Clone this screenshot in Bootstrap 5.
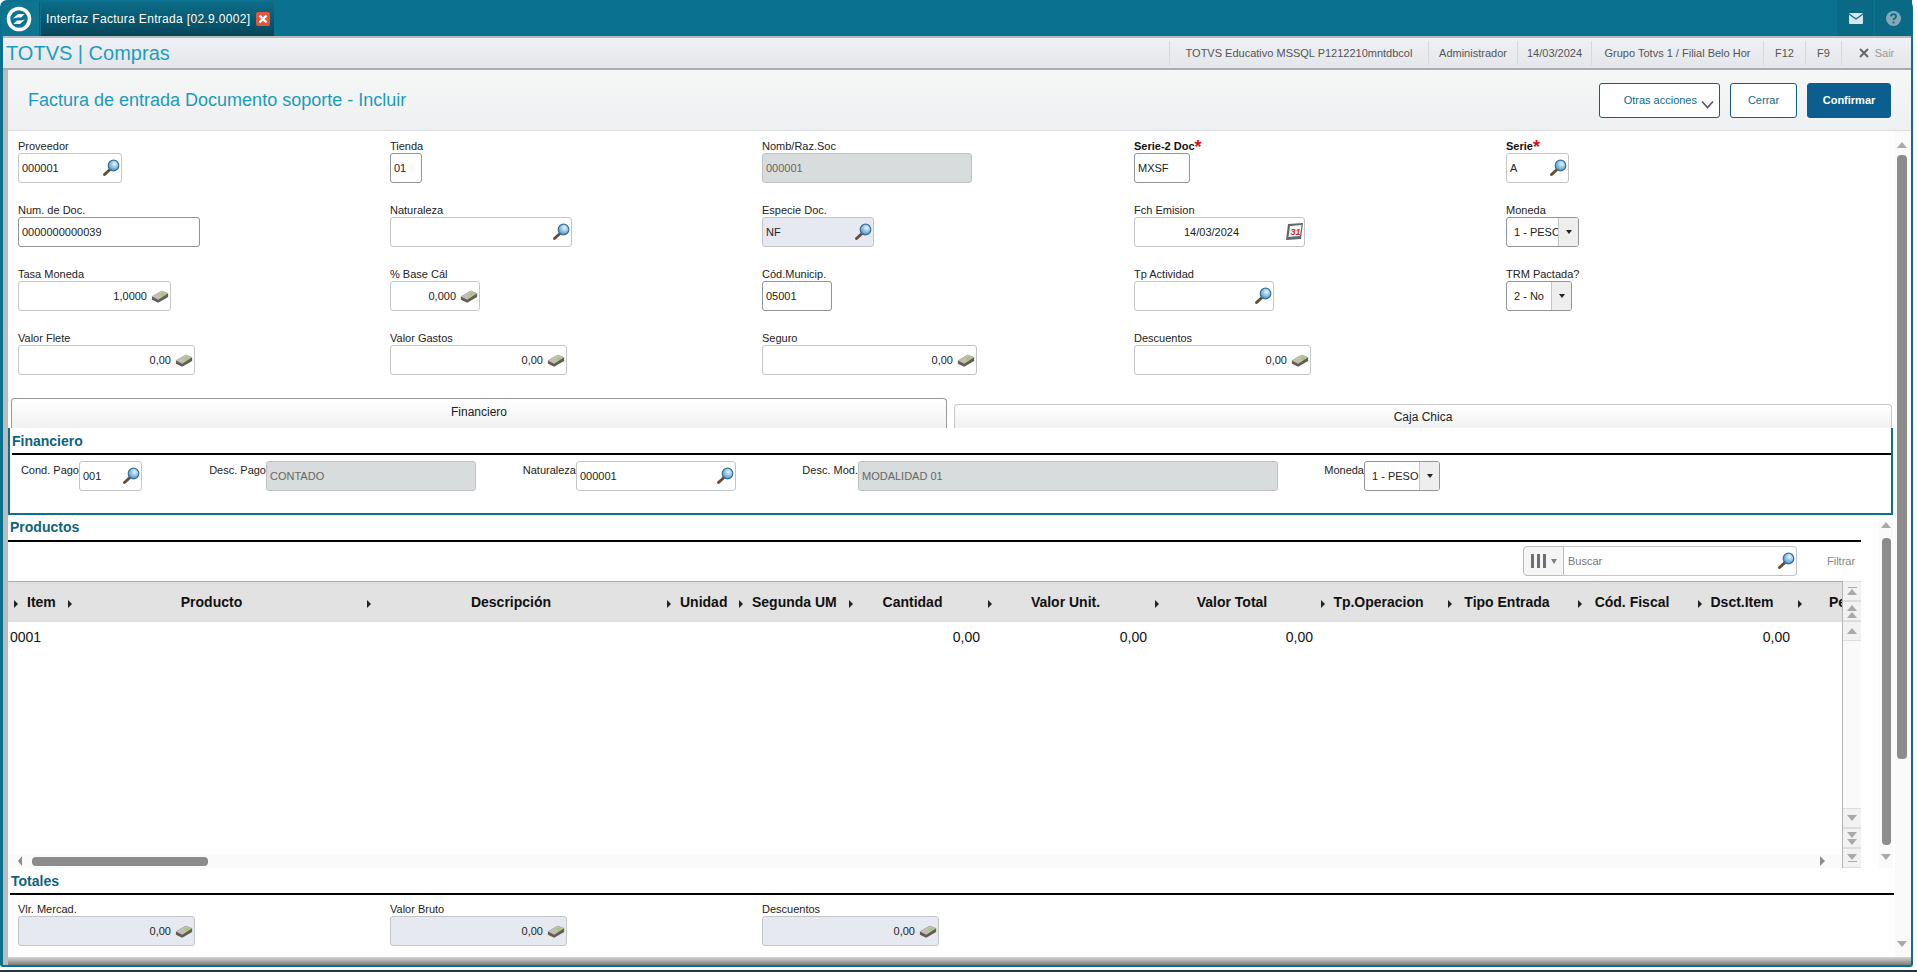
<!DOCTYPE html>
<html lang="es">
<head>
<meta charset="utf-8">
<title>Interfaz Factura Entrada</title>
<link rel="stylesheet" href="https://cdn.jsdelivr.net/npm/bootstrap@5.3.0/dist/css/bootstrap.min.css">
<style>
html,body{height:972px;overflow:hidden;background:#fff;}
body{font-family:"Liberation Sans",Arial,sans-serif;font-size:11px;color:#222;}
.app-frame{width:1913px;height:967px;background:#0b7190;border-radius:7px 7px 3px 3px;display:flex;flex-direction:column;padding:0 2px 2px 3px;}
.foot-strip{height:2px;margin-top:3px;background:#24363d;}
.top-bar{height:36px;flex:none;display:flex;margin:0 -2px 0 -3px;}
.logo-box{width:38px;margin-left:2px;margin-top:2px;padding-right:3px;border-radius:6px 0 0 0;background:#0d7590;border-right:1px solid #0a5d75;display:flex;align-items:center;justify-content:center;}
.win-tab{width:233px;margin-left:1px;margin-top:2px;background:linear-gradient(#0b6d88,#07465a);color:#fff;font-size:12px;letter-spacing:.32px;display:flex;align-items:center;padding-left:5px;gap:6px;}
.win-close{width:14px;height:14px;border-radius:2px;background:#e2553b;display:flex;align-items:center;justify-content:center;}
.top-ico{width:37px;margin-left:1px;background:#0a6a86;border-radius:0 0 3px 3px;display:flex;align-items:center;justify-content:center;}
.top-ico-end{margin-right:1px;}
.sys-bar{height:34px;flex:none;background:linear-gradient(#f0f1f4,#e3e6ea);border-top:2px solid #b9bcbf;border-bottom:2px solid #a9acae;display:flex;align-items:center;padding-left:3px;}
.sys-title{font-size:20px;color:#1a9ec0;line-height:1;}
.sys-item{height:24px;display:flex;align-items:center;font-size:11px;color:#555;border-left:1px solid #d6d8db;white-space:nowrap;justify-content:center;}
.si-a{width:259px;}.si-b{width:89px;}.si-c{width:74px;}.si-d{width:172px;}.si-e{width:42px;}.si-f{width:36px;}.si-g{width:70px;gap:6px;color:#999;}
.body-row{flex:1;min-height:0;display:flex;background:#fff;border-left:5px solid #bcbcbc;}
.body-main{flex:1;min-width:0;display:flex;flex-direction:column;}
.page-head{height:61px;flex:none;background:linear-gradient(#f6f7f7,#eef0f1);border-bottom:1px solid #d9dbdd;display:flex;align-items:center;padding-left:20px;padding-right:20px;}
.page-title{font-size:18px;color:#1a9cbb;margin:0;padding-top:2px;font-weight:400;flex:1;}
.act-btn{height:35px;border:1px solid #0b5f8a;border-radius:3px;background:#fff;color:#0b6990;font-size:11px;padding:0;display:flex;align-items:center;justify-content:center;}
.ab-more{width:121px;justify-content:flex-end;padding-right:5px;gap:4px;}.ab-close{width:67px;margin-left:10px;}.ab-ok{width:84px;margin-left:10px;background:#0b5e8e;color:#fff;font-weight:700;}
.form-wrap{flex:1;min-height:0;display:flex;}
.form-flow{flex:1;min-width:0;display:flex;flex-direction:column;}
.field-grid{display:grid;grid-template-columns:repeat(5,372px);row-gap:20px;padding:8px 0 0 10px;}
.fld-lbl{display:block;height:14px;line-height:15px;font-size:11px;color:#222;white-space:nowrap;margin:0;}
.fld-req{font-weight:700;color:#111;}
.fld-req i{color:#e01010;font-style:normal;font-size:18px;line-height:10px;font-weight:700;vertical-align:-3px;}
.fld-box{height:30px;border:1px solid #c3c6c8;border-radius:3px;background:#fff;display:flex;align-items:center;padding:0 1px 0 3px;font-size:11px;color:#222;box-sizing:border-box;overflow:hidden;}
.fld-box span{flex:1;white-space:nowrap;overflow:hidden;}
.fld-dark{border-color:#8e9497;}
.fld-off{background:#d9dcdd;color:#666;border-color:#bfc3c5;}
.fld-soft{background:#e6e9f0;border-color:#c3c6c8;}
.fld-num span{text-align:right;padding-right:4px;}
.fld-date span{text-align:center;}
.w32{width:32px;}.w56{width:56px;}.w63{width:63px;}.w66{width:66px;}.w70{width:70px;}.w73{width:73px;}.w76{width:76px;}.w90{width:90px;}.w104{width:104px;}.w112{width:112px;}.w140{width:140px;}.w153{width:153px;}.w160{width:160px;}.w171{width:171px;}.w177{width:177px;}.w182{width:182px;}.w210{width:210px;}.w215{width:215px;}.w420{width:420px;}
.sel-drop{width:20px;height:30px;margin-right:-1px;background:#eee;border-left:1px solid #c3c6c8;display:flex;align-items:center;justify-content:center;flex:none;}
.sel-drop::after{content:"";border:3.5px solid transparent;border-top:4px solid #222;border-bottom:0;}
.tab-row{display:flex;align-items:flex-end;gap:7px;height:30px;margin:23px 3px 0 3px;}
.tab-a,.tab-b{border:1px solid #c6c6c6;border-bottom:0;border-radius:4px 4px 0 0;background:linear-gradient(#fff,#f1f1f1);text-align:center;font-size:12px;color:#222;}
.tab-a{width:936px;height:30px;line-height:26px;border-color:#9a9a9a;}
.tab-b{flex:1;height:24px;line-height:25px;}
.fin-panel{height:87px;flex:none;width:1885px;border:2px solid #0b7190;border-top:0;}
.sec-title{font-size:14px;font-weight:700;color:#0b6480;line-height:16px;margin:0;}
.fin-panel .sec-title{padding:5px 0 0 2px;height:25px;}
.blk-rule{height:2px;background:#000;border:0;margin:0;opacity:1;}
.fin-panel .blk-rule{margin-left:2px;}
.fin-row{display:flex;align-items:flex-start;padding-top:6px;}
.fin-row .fld-lbl{text-align:right;padding-top:2px;}
.lb1{width:69px;}.lb2{width:124px;}.lb3{width:100px;}.lb4{width:122px;}.lb5{width:86px;}
.prod-row{display:flex;height:353px;flex:none;}
.prod-main{width:1853px;flex:none;display:flex;flex-direction:column;}
.prod-main .sec-title{padding:4px 0 0 2px;height:25px;}
.tool-row{display:flex;height:30px;margin-top:4px;flex:none;}
.col-btn{margin-left:1515px;width:41px;height:30px;border:1px solid #bbb;border-radius:4px 0 0 4px;background:#f5f5f5;display:flex;align-items:center;justify-content:center;gap:5px;}
.col-bars{display:flex;gap:3px;}
.col-bars b{display:block;width:3px;height:14px;background:#6a6f78;}
.dn-tri{border:3.5px solid transparent;border-top:5px solid #7a7f88;border-bottom:0;}
.srch-box{width:233px;height:30px;border:1px solid #c3c6c8;border-left:0;border-radius:0 4px 4px 0;display:flex;align-items:center;padding:0 1px 0 4px;color:#777;font-size:11px;}
.srch-box span{flex:1;}
.filter-lnk{margin-left:30px;line-height:30px;color:#888;font-size:11px;}
.grid-wrap{margin-top:5px;height:287px;display:flex;flex:none;}
.grid-left{width:1834px;flex:none;overflow:hidden;display:flex;flex-direction:column;}
.grid-tbl{table-layout:fixed;width:1904px;border-collapse:collapse;font-size:14px;color:#111;}
.grid-tbl th{height:40px;background:#e2e2e2;border-top:1px solid #aaa;font-weight:700;text-align:center;position:relative;white-space:nowrap;padding:2px 0 0;overflow:hidden;font-size:14px;}
.grid-tbl th::before{content:"";position:absolute;left:6px;top:18px;border:4px solid transparent;border-left:4px solid #222;border-right:0;}
.grid-tbl th.tl{text-align:left;padding-left:19px;}
.grid-tbl th.tf{text-align:left;padding-left:37px;}
.grid-tbl td{height:30px;padding:2px 2px 0;text-align:right;vertical-align:middle;}
.grid-tbl td.tl{text-align:left;}
.c1{width:54px;}.c2{width:299px;}.c3{width:300px;}.c4{width:72px;}.c5{width:110px;}.c6{width:139px;}.c7{width:167px;}.c8{width:166px;}.c9{width:127px;}.c10{width:130px;}.c11{width:120px;}.c12{width:100px;}.c13{width:120px;}
.grid-fill{flex:1;}
.hscroll{height:14px;background:#fafafa;display:flex;align-items:center;flex:none;padding-left:10px;}
.tri-l{border:5px solid transparent;border-right:4px solid #8c8c8c;border-left:0;}
.tri-r{border:5px solid transparent;border-left:5px solid #8c8c8c;border-right:0;margin-left:1612px;}
.h-thumb{width:176px;height:9px;border-radius:4px;background:#8c8c8c;margin-left:10px;}
.grid-vert{width:19px;flex:none;border-left:1px solid #b5b5b5;background:#fafafa;display:flex;flex-direction:column;}
.gv-btn{height:20px;background:#f2f2f2;border-bottom:1px solid #ddd;border-top:1px solid #ddd;display:flex;flex-direction:column;align-items:center;justify-content:center;gap:1px;flex:none;}
.gv-sp{flex:1;}
.up-t{border:5px solid transparent;border-bottom:6px solid #a9a9a9;border-top:0;}
.dn-t{border:5px solid transparent;border-top:6px solid #a9a9a9;border-bottom:0;}
.bar-t{width:9px;height:1px;background:#a9a9a9;}
.scr-strip{width:14px;margin-left:18px;background:#fafafa;display:flex;flex-direction:column;align-items:center;flex:none;padding-top:7px;}
.scr-strip .v-thumb{width:9px;height:307px;margin:10px 0 9px;background:#8c8c8c;border-radius:4px;}
.tot-sec{flex:1;min-height:0;padding:0 1px 0 2px;}
.tot-sec .sec-title{padding:5px 0 0 1px;height:25px;}
.tot-grid{display:grid;grid-template-columns:repeat(3,372px);padding:7px 0 0 8px;}
.outer-scr{width:16px;background:#fafafa;flex:none;display:flex;flex-direction:column;align-items:center;padding:11px 2px 0 0;}
.outer-scr .v-thumb{width:10px;flex:1;background:#8c8c8c;border-radius:4px;margin-top:7px;margin-bottom:182px;}
.outer-scr .dn-t{margin-bottom:10px;}
.form-shadow{height:8px;flex:none;background:linear-gradient(#d6d6d6,#7c7c7c);}
</style>
</head>
<body>
<svg width="0" height="0" class="d-block position-absolute">
  <defs>
    <radialGradient id="lens" cx="60%" cy="35%" r="70%"><stop offset="0" stop-color="#e8f6ff"/><stop offset="1" stop-color="#3e8fc4"/></radialGradient>
    <symbol id="ic-search" viewBox="0 0 18 18">
      <line x1="8" y1="10.5" x2="2.5" y2="15.5" stroke="#6b4b35" stroke-width="3" stroke-linecap="round"/>
      <circle cx="11.5" cy="6.5" r="5.3" fill="url(#lens)" stroke="#36729c" stroke-width="1.2"/>
    </symbol>
    <symbol id="ic-money" viewBox="0 0 20 16">
      <polygon points="1,8 12,1.5 19,4.5 19,8.5 8,15 1,11.5" fill="#655d53"/>
      <polygon points="1,8 12,1.5 19,4.5 8,11.5" fill="#c4bfb6"/>
      <polygon points="9.5,5.8 13,3.6 17,5.2 13,7.8" fill="#9ccf6e"/>
    </symbol>
    <symbol id="ic-cal" viewBox="0 0 18 18">
      <polygon points="3,1 18,0 16,16 1,17" fill="#62676b"/>
      <polygon points="5,3 16.5,2 15,13 3.5,14" fill="#f6f6f6"/>
      <text x="5.5" y="12" font-size="9" font-weight="700" font-style="italic" fill="#d8232a" font-family="Liberation Sans">31</text>
    </symbol>
  </defs>
</svg>

<div class="app-frame">
  <div class="top-bar">
    <div class="logo-box">
      <svg width="26" height="26" viewBox="0 0 26 26" aria-hidden="true">
        <circle cx="13" cy="13" r="10.5" fill="none" stroke="#fff" stroke-width="3.6"/>
        <path d="M7 12.5 12 8h6.5l-3.4 3.6H11.2z" fill="#fff"/>
        <path d="M19 13.5 14 18H7.5l3.4-3.6h3.9z" fill="#fff"/>
      </svg>
    </div>
    <div class="win-tab">
      <span>Interfaz Factura Entrada [02.9.0002]</span>
      <span class="win-close">
        <svg width="10" height="10" viewBox="0 0 10 10" aria-hidden="true"><path d="M1.5 1.5l7 7M8.5 1.5l-7 7" stroke="#fff" stroke-width="2.4"/></svg>
      </span>
    </div>
    <div class="flex-grow-1"></div>
    <div class="top-ico">
      <svg width="14" height="11" viewBox="0 0 14 11" aria-hidden="true"><rect width="14" height="11" rx="1" fill="#d5e6ee"/><path d="M0 1l7 5 7-5" fill="none" stroke="#0a6a86" stroke-width="1.3"/></svg>
    </div>
    <div class="top-ico top-ico-end">
      <svg width="15" height="15" viewBox="0 0 15 15" aria-hidden="true"><circle cx="7.5" cy="7.5" r="7.5" fill="#84a9b6"/><path d="M5 5.5c0-3.2 5-3.2 5 0 0 2-2.5 2-2.5 3.6" fill="none" stroke="#0a6a86" stroke-width="1.8"/><rect x="6.6" y="10.5" width="1.8" height="1.9" fill="#0a6a86"/></svg>
    </div>
  </div>

  <div class="sys-bar">
    <div class="sys-title flex-grow-1">TOTVS | Compras</div>
    <div class="sys-item si-a">TOTVS Educativo MSSQL P1212210mntdbcol</div>
    <div class="sys-item si-b">Administrador</div>
    <div class="sys-item si-c">14/03/2024</div>
    <div class="sys-item si-d">Grupo Totvs 1 / Filial Belo Hor</div>
    <div class="sys-item si-e">F12</div>
    <div class="sys-item si-f">F9</div>
    <div class="sys-item si-g">
      <svg width="10" height="10" viewBox="0 0 10 10" aria-hidden="true"><path d="M1 1l8 8M9 1l-8 8" stroke="#666" stroke-width="2"/></svg>
      <span>Sair</span>
    </div>
  </div>

  <div class="body-row">
    <div class="body-main">
      <div class="page-head">
        <h1 class="page-title">Factura de entrada Documento soporte - Incluir</h1>
        <button type="button" class="act-btn ab-more">Otras acciones
          <svg width="13" height="9" viewBox="0 0 13 9" class="mt-2" aria-hidden="true"><path d="M1 1.5l5.5 6 5.5-6" fill="none" stroke="#555" stroke-width="1.6"/></svg>
        </button>
        <button type="button" class="act-btn ab-close">Cerrar</button>
        <button type="button" class="act-btn ab-ok">Confirmar</button>
      </div>

      <div class="form-wrap">
        <div class="form-flow">
          <div class="field-grid">
            <div><label class="fld-lbl">Proveedor</label><div class="fld-box w104"><span>000001</span><svg width="18" height="18"><use href="#ic-search"/></svg></div></div>
            <div><label class="fld-lbl">Tienda</label><div class="fld-box fld-dark w32"><span>01</span></div></div>
            <div><label class="fld-lbl">Nomb/Raz.Soc</label><div class="fld-box fld-off w210"><span>000001</span></div></div>
            <div><label class="fld-lbl fld-req">Serie-2 Doc<i>*</i></label><div class="fld-box fld-dark w56"><span>MXSF</span></div></div>
            <div><label class="fld-lbl fld-req">Serie<i>*</i></label><div class="fld-box w63"><span>A</span><svg width="18" height="18"><use href="#ic-search"/></svg></div></div>

            <div><label class="fld-lbl">Num. de Doc.</label><div class="fld-box fld-dark w182"><span>0000000000039</span></div></div>
            <div><label class="fld-lbl">Naturaleza</label><div class="fld-box w182"><span></span><svg width="18" height="18"><use href="#ic-search"/></svg></div></div>
            <div><label class="fld-lbl">Especie Doc.</label><div class="fld-box fld-soft w112"><span>NF</span><svg width="18" height="18"><use href="#ic-search"/></svg></div></div>
            <div><label class="fld-lbl">Fch Emision</label><div class="fld-box w171 fld-date"><span>14/03/2024</span><svg width="18" height="18"><use href="#ic-cal"/></svg></div></div>
            <div><label class="fld-lbl">Moneda</label><div class="fld-box fld-dark w73"><span class="ps-1">1 - PESO</span><div class="sel-drop"></div></div></div>

            <div><label class="fld-lbl">Tasa Moneda</label><div class="fld-box w153 fld-num"><span>1,0000</span><svg width="18" height="15"><use href="#ic-money"/></svg></div></div>
            <div><label class="fld-lbl">% Base Cál</label><div class="fld-box w90 fld-num"><span>0,000</span><svg width="18" height="15"><use href="#ic-money"/></svg></div></div>
            <div><label class="fld-lbl">Cód.Municip.</label><div class="fld-box fld-dark w70"><span>05001</span></div></div>
            <div><label class="fld-lbl">Tp Actividad</label><div class="fld-box w140"><span></span><svg width="18" height="18"><use href="#ic-search"/></svg></div></div>
            <div><label class="fld-lbl">TRM Pactada?</label><div class="fld-box fld-dark w66"><span class="ps-1">2 - No</span><div class="sel-drop"></div></div></div>

            <div><label class="fld-lbl">Valor Flete</label><div class="fld-box w177 fld-num"><span>0,00</span><svg width="18" height="15"><use href="#ic-money"/></svg></div></div>
            <div><label class="fld-lbl">Valor Gastos</label><div class="fld-box w177 fld-num"><span>0,00</span><svg width="18" height="15"><use href="#ic-money"/></svg></div></div>
            <div><label class="fld-lbl">Seguro</label><div class="fld-box w215 fld-num"><span>0,00</span><svg width="18" height="15"><use href="#ic-money"/></svg></div></div>
            <div><label class="fld-lbl">Descuentos</label><div class="fld-box w177 fld-num"><span>0,00</span><svg width="18" height="15"><use href="#ic-money"/></svg></div></div>
          </div>

          <div class="tab-row">
            <div class="tab-a">Financiero</div>
            <div class="tab-b">Caja Chica</div>
          </div>
          <div class="fin-panel">
            <h2 class="sec-title">Financiero</h2>
            <hr class="blk-rule">
            <div class="fin-row">
              <label class="fld-lbl lb1">Cond. Pago</label><div class="fld-box w63"><span>001</span><svg width="18" height="18"><use href="#ic-search"/></svg></div>
              <label class="fld-lbl lb2">Desc. Pago</label><div class="fld-box fld-off w210"><span>CONTADO</span></div>
              <label class="fld-lbl lb3">Naturaleza</label><div class="fld-box w160"><span>000001</span><svg width="18" height="18"><use href="#ic-search"/></svg></div>
              <label class="fld-lbl lb4">Desc. Mod.</label><div class="fld-box fld-off w420"><span>MODALIDAD 01</span></div>
              <label class="fld-lbl lb5">Moneda</label><div class="fld-box fld-dark w76"><span class="ps-1">1 - PESO</span><div class="sel-drop"></div></div>
            </div>
          </div>

          <div class="prod-row">
            <div class="prod-main">
              <h2 class="sec-title">Productos</h2>
              <hr class="blk-rule">
              <div class="tool-row">
                <div class="col-btn"><div class="col-bars"><b></b><b></b><b></b></div><div class="dn-tri"></div></div>
                <div class="srch-box"><span>Buscar</span><svg width="18" height="18"><use href="#ic-search"/></svg></div>
                <div class="filter-lnk">Filtrar</div>
              </div>
              <div class="grid-wrap">
                <div class="grid-left">
                  <table class="grid-tbl">
                    <colgroup><col class="c1"><col class="c2"><col class="c3"><col class="c4"><col class="c5"><col class="c6"><col class="c7"><col class="c8"><col class="c9"><col class="c10"><col class="c11"><col class="c12"><col class="c13"></colgroup>
                    <thead><tr>
                      <th class="tl">Item</th><th>Producto</th><th>Descripción</th><th class="tl">Unidad</th><th class="tl">Segunda UM</th><th>Cantidad</th><th>Valor Unit.</th><th>Valor Total</th><th>Tp.Operacion</th><th>Tipo Entrada</th><th>Cód. Fiscal</th><th>Dsct.Item</th><th class="tf">Pe</th>
                    </tr></thead>
                    <tbody><tr>
                      <td class="tl">0001</td><td></td><td></td><td></td><td></td><td>0,00</td><td>0,00</td><td>0,00</td><td></td><td></td><td></td><td>0,00</td><td></td>
                    </tr></tbody>
                  </table>
                  <div class="grid-fill"></div>
                  <div class="hscroll"><div class="tri-l"></div><div class="h-thumb"></div><div class="tri-r"></div></div>
                </div>
                <div class="grid-vert">
                  <div class="gv-btn"><div class="bar-t"></div><div class="up-t"></div></div>
                  <div class="gv-btn"><div class="up-t"></div><div class="up-t"></div></div>
                  <div class="gv-btn"><div class="up-t"></div></div>
                  <div class="gv-sp"></div>
                  <div class="gv-btn"><div class="dn-t"></div></div>
                  <div class="gv-btn"><div class="dn-t"></div><div class="dn-t"></div></div>
                  <div class="gv-btn"><div class="dn-t"></div><div class="bar-t"></div></div>
                </div>
              </div>
            </div>
            <div class="scr-strip"><div class="up-t"></div><div class="v-thumb"></div><div class="dn-t"></div></div>
          </div>

          <div class="tot-sec">
            <h2 class="sec-title">Totales</h2>
            <hr class="blk-rule">
            <div class="tot-grid">
              <div><label class="fld-lbl">Vlr. Mercad.</label><div class="fld-box fld-soft w177 fld-num"><span>0,00</span><svg width="18" height="15"><use href="#ic-money"/></svg></div></div>
              <div><label class="fld-lbl">Valor Bruto</label><div class="fld-box fld-soft w177 fld-num"><span>0,00</span><svg width="18" height="15"><use href="#ic-money"/></svg></div></div>
              <div><label class="fld-lbl">Descuentos</label><div class="fld-box fld-soft w177 fld-num"><span>0,00</span><svg width="18" height="15"><use href="#ic-money"/></svg></div></div>
            </div>
          </div>
        </div>
        <div class="outer-scr"><div class="up-t"></div><div class="v-thumb"></div><div class="dn-t"></div></div>
      </div>
      <div class="form-shadow"></div>
    </div>
  </div>
</div>
<div class="foot-strip"></div>
<script src="https://cdn.jsdelivr.net/npm/bootstrap@5.3.0/dist/js/bootstrap.bundle.min.js"></script>
</body>
</html>
